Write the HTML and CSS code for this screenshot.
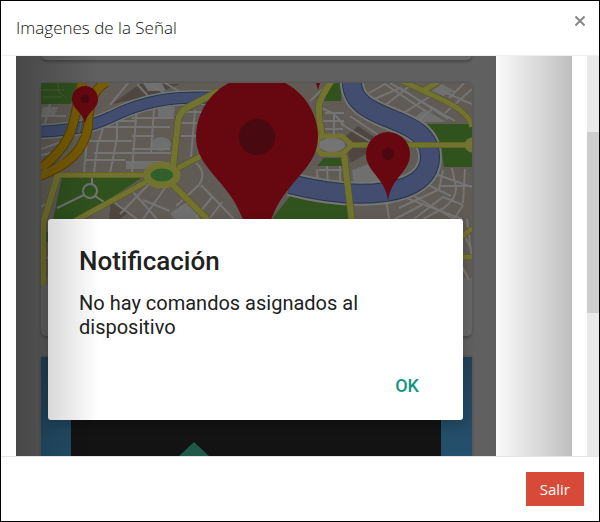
FILE: index.html
```html
<!DOCTYPE html>
<html lang="es">
<head>
<meta charset="utf-8">
<meta name="viewport" content="width=device-width, initial-scale=1">
<title>Imagenes de la Señal</title>
<link rel="stylesheet" href="styles.css">
</head>
<body>
<div class="modal">
  <header class="modal-header">
    <h1 class="modal-title">Imagenes de la Señal</h1>
    <button class="close" type="button" aria-label="Cerrar">
      <svg width="10" height="10" viewBox="0 0 10 10" aria-hidden="true"><path d="M.5 .5L9.500 9.500M9.500 .5L.5 9.500"/></svg>
    </button>
  </header>
  <main class="modal-body">
    <section class="carousel">
      <div class="slide">
        <svg class="map" viewBox="16 56 480 400" preserveAspectRatio="xMinYMin slice" aria-hidden="true">
          <defs>
            <clipPath id="mapClip"><path d="M41 83H472V330Q472 336 466 336H47Q41 336 41 330Z"/></clipPath>
            <linearGradient id="blue" x1="0" y1="0" x2="0" y2="1"><stop offset="0" stop-color="#214357"/><stop offset="1" stop-color="#24506d"/></linearGradient>
            <filter id="soft" x="-5%" y="-5%" width="110%" height="110%"><feGaussianBlur stdDeviation="1.5"/></filter>
          </defs>
          <rect x="16" y="56" width="480" height="400" fill="#606060"/>
          <g fill="#454545" filter="url(#soft)">
            <rect x="41" y="40" width="431" height="22" rx="6"/>
            <rect x="41" y="83" width="431" height="255" rx="6"/>
            <rect x="41" y="357" width="431" height="110"/>
          </g>
          <rect x="41" y="40" width="431" height="20" rx="6" fill="#696969"/>
          <g clip-path="url(#mapClip)">
            <rect x="41" y="83" width="431" height="254" fill="#666"/>
            <rect x="41" y="83" width="431" height="195" fill="#605b55"/>
            <!-- built-up blocks -->
            <g fill="#504640">
              <path d="M112 104L140 84H180L151 96ZM345 137L358 126L374 137L388 148L366 154L350 163ZM111 201L128 213L120 219H109Z"/>
            </g>
            <g fill="#6f6f6f">
              <path d="M158 107H175L173 118H158ZM143 83H162L166 91H148ZM352 170L374 162L382 183L354 188ZM414 118L425 109L446 122H418ZM431 91L442 84L455 91L443 96ZM170 213L187 202L201 219H174Z"/>
              <ellipse cx="161" cy="144" rx="10" ry="7"/>
              <path d="M126 161H163V169H126ZM43 107H58L54 117H41Z"/>
            </g>
            <!-- side streets -->
            <g class="street">
              <path d="M41 116H66M50 104L44 127M41 149L64 141M41 155L61 151M110 105L128 83M137 84L148 96M150 84L166 94M165 83L180 92"/>
              <path d="M117 112V138L110 173M88 127L84 173M137 103L132 173M154 108L151 153M91 127H170M88 141H132M94 153H172M85 160H125M132 136H154M98 141L94 173M109 121H137M103 128L99 141M132 118H174M132 149H170"/>
              <path d="M195 110L191 157M208 103L201 148M178 123H197M181 112H205M181 136H197M196 163Q207 172 199 185L176 206M201 185L234 219M213 196L195 218M222 202L210 218M133 192L157 219M149 184L120 214M165 188L143 219M112 201L137 219M143 200L170 211"/>
              <path d="M310 101L329 83M318 106L334 114L344 125M325 113H344M323 121H344M325 129H343M334 112V134M341 124L376 145M350 116L390 143M365 103L400 88L448 119M378 111L412 84M394 119L429 97M410 127L434 108M369 93L385 84L425 111M390 83L455 121M405 83L430 96M449 98L464 83M437 89L472 104M445 113L472 89"/>
              <path d="M319 170H344M327 166L328 189M317 169L318 187M340 166V191M386 198L389 219M362 205L389 203L401 196L462 219M399 208L438 190M414 196L454 219M426 184L451 196M438 175L472 187M452 168L456 187Q457 198 444 208L423 219M438 186H472M443 170L439 190M465 169L463 203M414 219L443 197L463 205M395 219L422 205M463 205L454 219M467 219L472 260M457 257L469 280"/>
              <path d="M41 207L50 202M41 262L48 257M464 234L471 249"/>
            </g>
            <!-- parks -->
            <g fill="#30531e">
              <path d="M41 83H77L71 104H41ZM62 177H143L100 205L75 220H53ZM423 124H472V167H444L440 143ZM290 196Q320 205 348 205L350 219H272ZM329 83H342L341 101H322ZM317 166L324 158H341L343 166Z"/>
              <path d="M41 232H48V242H41Z"/>
            </g>
            <g fill="none" stroke="#476235"><path d="M41 90H64M43 97H62M58 83V91L64 96"/></g>
            <g class="street">
              <circle cx="90" cy="191" r="7"/><path d="M92 178V184M84 195L57 208M95 196L104 202"/>
            </g>
            <!-- rivers -->
            <g fill="none">
              <g stroke="#737673">
                <path d="M38 132C72 130 87 128 111 117C143 101 170 96 219 98" stroke-width="15"/>
                <path d="M352 78C348 126 430 111 430 157C430 196 361 202 290 184" stroke-width="24"/>
              </g>
              <g stroke="#27354d">
                <path d="M38 132C72 130 87 128 111 117C143 101 170 96 219 98" stroke-width="12"/>
                <path d="M352 78C348 126 430 111 430 157C430 196 361 202 290 184" stroke-width="20"/>
              </g>
              <g stroke="#424d70">
                <path d="M38 132C72 130 87 128 111 117C143 101 170 96 219 98" stroke-width="10"/>
                <path d="M352 78C348 126 430 111 430 157C430 196 361 202 290 184" stroke-width="18"/>
              </g>
            </g>
            <!-- main roads -->
            <g fill="none" stroke="#57561c">
              <path d="M58 174L43 223V285M172 184L208 220M173 167L178 122Q179 111 190 106L219 91M344 155L352 222M332 80C318 101 316 105 322 135" stroke-width="7"/>
              <path d="M54 175H145M146 182L73 222M178 168L201 156M353 145H470M402 81L443 100Q470 113 472 127M424 90L438 82M472 228L462 237M460 257H472" stroke-width="6"/>
            </g>
            <g fill="none" stroke="#737330">
              <path d="M58 174L43 223V285M172 184L208 220M173 167L178 122Q179 111 190 106L219 91M344 155L352 222M332 80C318 101 316 105 322 135" stroke-width="6"/>
              <path d="M54 175H145M146 182L73 222M178 168L201 156M353 145H470M402 81L443 100Q470 113 472 127M424 90L438 82M472 228L462 237M460 257H472" stroke-width="5"/>
            </g>
            <g stroke="#737330">
              <ellipse cx="162" cy="175" rx="15" ry="10" fill="#30602b" stroke-width="7"/>
              <path d="M321 136H342L352 145L342 154H321L315 145Z" fill="#605b55" stroke-width="5" stroke-linejoin="round"/>
              <ellipse cx="332" cy="145" rx="13" ry="7" fill="#747474" stroke="none"/>
              <circle cx="472" cy="145" r="7" fill="#737330"/>
            </g>
            <!-- highway -->
            <g fill="none">
              <g stroke="#574207" stroke-width="10">
                <path d="M82 83C73 116 79 139 41 168M107 82Q88 91 88 127C84 151 68 165 40 176"/>
              </g>
              <g stroke="#795c02" stroke-width="8">
                <path d="M82 83C73 116 79 139 41 168M107 82Q88 91 88 127C84 151 68 165 40 176"/>
              </g>
              <path d="M82 115C80 143 68 158 43 173" stroke="#686352"/>
            </g>
            <!-- pins -->
            <g fill="#670810">
              <path d="M196 137A61 61 0 0 1 318 137C318 168 287 180 273 215L257 249L241 215C227 180 196 168 196 137Z"/>
              <path d="M72 99A13 13 0 0 1 98 99C98 110 87 111 85 124C83 111 72 110 72 99Z"/>
              <path d="M366 154A22 22 0 0 1 410 154C410 172 392 176 388 200C384 176 366 172 366 154Z"/>
              <path d="M316 83H320L318 90Z"/>
            </g>
            <g fill="#490910"><circle cx="257" cy="137" r="18"/><circle cx="85" cy="99" r="4"/><circle cx="388" cy="154" r="6"/></g>
          </g>
          <rect x="41" y="357" width="431" height="100" fill="url(#blue)"/>
          <rect x="71" y="380" width="370" height="76" fill="#131313"/>
          <path d="M179 456L194 442L209 456Z" fill="#1f5947"/>
        </svg>
        <div class="alert" role="alertdialog" aria-labelledby="alertTitle" aria-describedby="alertText">
          <h2 class="alert-title" id="alertTitle">Notificación</h2>
          <p class="alert-text" id="alertText">No hay comandos asignados al dispositivo</p>
          <button class="alert-ok" type="button">OK</button>
        </div>
      </div>
      <button class="control control-prev" type="button" aria-label="Anterior"></button>
      <button class="control control-next" type="button" aria-label="Siguiente"></button>
    </section>
    <div class="scrollbar" aria-hidden="true"><div class="thumb"></div></div>
  </main>
  <footer class="modal-footer">
    <button class="btn-exit" type="button">Salir</button>
  </footer>
</div>
</body>
</html>
```
FILE: styles.css
```css
* {
  box-sizing: border-box;
}

body {
  margin: 0;
  font-family: "Open Sans", sans-serif;
}

button {
  margin: 0;
  border: 0;
  cursor: pointer;
}

.modal {
  display: flex;
  flex-direction: column;
  min-height: 100vh;
  border: 1px solid #000;
  background: #fff;
}

.modal-header {
  display: flex;
  justify-content: space-between;
  align-items: flex-start;
  padding: 15px 14px 15px 15px;
  border-bottom: 1px solid #eee;
}

.modal-title {
  margin: 0;
  font-size: 17px;
  font-weight: 300;
  line-height: 24px;
  color: #111;
}

.close {
  display: flex;
  padding: 0;
  background: none;
}

.close path {
  fill: none;
  stroke: #888;
  stroke-width: 2;
}

.modal-body {
  display: flex;
  flex: 1;
  gap: 15px;
  padding-left: 15px;
}

.carousel {
  position: relative;
  display: flex;
  flex: 1;
  overflow: hidden;
}

.slide {
  display: grid;
  grid-template-columns: 100%;
  width: 480px;
}

.map {
  grid-area: 1 / 1;
  width: 100%;
  height: 100%;
}

.street {
  fill: none;
  stroke: #747474;
  stroke-width: 2;
}

.alert {
  grid-area: 1 / 1;
  display: flex;
  flex-direction: column;
  align-self: end;
  margin: 0 33px 36px 32px;
  padding: 27px 32px 16px 31px;
  border-radius: 3px;
  background: #fff;
  box-shadow: 0 4px 12px rgba(0, 0, 0, 0.2);
  font-family: Roboto, sans-serif;
  color: #212121;
  z-index: 0;
}

.alert-title {
  margin: 0 0 14px;
  font-size: 26px;
  font-weight: 500;
  line-height: 31px;
}

.alert-text {
  margin: 0 0 29px;
  font-size: 20px;
  line-height: 24px;
}

.alert-ok {
  align-self: flex-end;
  padding: 0 12px;
  background: none;
  font: 500 18px/36px Roboto, sans-serif;
  color: #129484;
}

.control {
  position: absolute;
  top: 0;
  bottom: 0;
  width: 15%;
  z-index: 1;
}

.control-prev {
  left: 0;
  background: linear-gradient(to right, rgba(0, 0, 0, 0.25), transparent);
}

.control-next {
  right: 0;
  background: linear-gradient(to right, transparent, rgba(0, 0, 0, 0.25));
}

.scrollbar {
  display: grid;
  grid-template-rows: 76fr 181fr 143fr;
  width: 12px;
  background: #e9e9e9;
}

.thumb {
  grid-row: 2;
  background: #cdcdcd;
}

.modal-footer {
  display: flex;
  justify-content: flex-end;
  padding: 15px;
  border-top: 1px solid #e5e5e5;
}

.btn-exit {
  padding: 6px 14px;
  background: #d84a38;
  font: 400 15px/22px "Open Sans", sans-serif;
  color: #fff;
}
```
